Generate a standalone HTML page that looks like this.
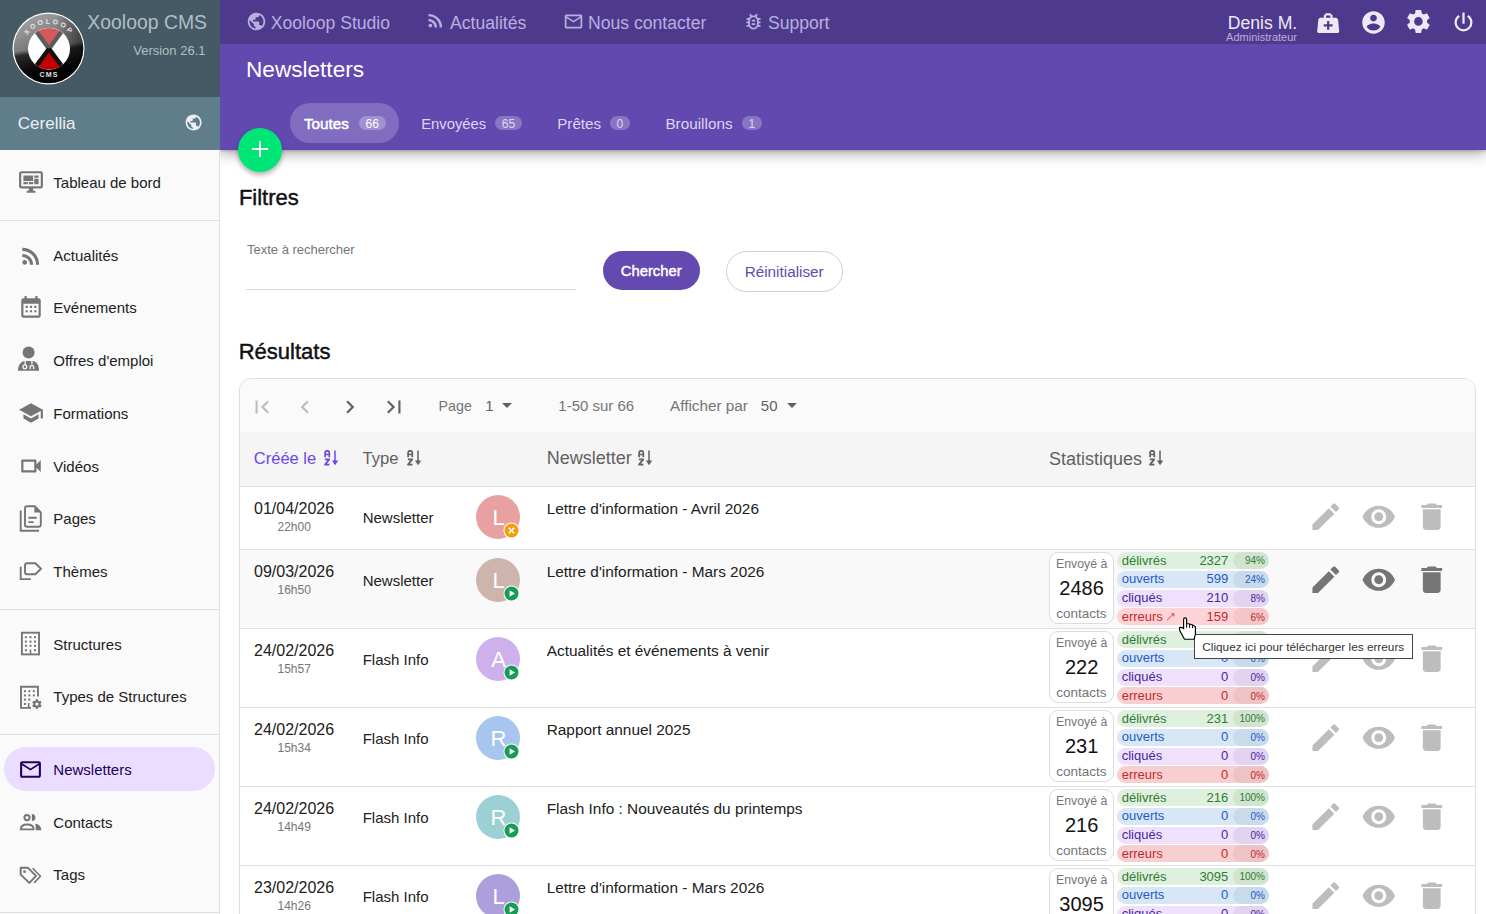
<!DOCTYPE html><html><head><meta charset="utf-8"><style>
html,body{margin:0;padding:0;width:1486px;height:914px;overflow:hidden;background:#fff;font-family:"Liberation Sans",sans-serif;}
.t{position:absolute;white-space:nowrap;line-height:1;}
svg{display:block}
</style></head><body>
<div style="position:absolute;left:0px;top:0px;width:220px;height:97px;background:#455a64"></div>
<div style="position:absolute;left:0px;top:97px;width:220px;height:53px;background:#607d8b"></div>
<div style="position:absolute;left:0px;top:150px;width:219px;height:764px;background:#fafafa;border-right:1px solid #e0e0e0"></div>
<svg style="position:absolute;left:12.0px;top:12.0px;" width="73" height="73" viewBox="0 0 73 73">
<defs>
<linearGradient id="lg1" x1="0.45" y1="0" x2="0.6" y2="1"><stop offset="0" stop-color="#a8a8a8"/><stop offset="0.47" stop-color="#7e7e7e"/><stop offset="0.54" stop-color="#2a2a2a"/><stop offset="0.8" stop-color="#050505"/><stop offset="1" stop-color="#000"/></linearGradient>
<linearGradient id="lg2" x1="0" y1="0" x2="1" y2="0"><stop offset="0" stop-color="#000" stop-opacity="0"/><stop offset="0.6" stop-color="#000" stop-opacity="0.1"/><stop offset="1" stop-color="#000" stop-opacity="0.55"/></linearGradient>
<clipPath id="inner"><circle cx="37" cy="36.7" r="20.8"/></clipPath>
</defs>
<circle cx="36.5" cy="36.5" r="36" fill="#fff"/>
<circle cx="36.5" cy="36.5" r="34.8" fill="url(#lg1)"/>
<circle cx="36.5" cy="36.5" r="34.8" fill="url(#lg2)"/>
<circle cx="37" cy="36.7" r="21" fill="#fff"/>
<g clip-path="url(#inner)">
<polygon points="37,36.7 19,12 55,12" fill="#d45a5a"/>
<polygon points="37,36.7 19,61 55,61" fill="#c00000"/>
<line x1="24" y1="19" x2="37" y2="36.7" stroke="#5c5c5c" stroke-width="4.4"/>
<line x1="50" y1="19" x2="37" y2="36.7" stroke="#5c5c5c" stroke-width="4.4"/>
<line x1="24" y1="54.4" x2="37" y2="36.7" stroke="#111" stroke-width="4.4"/>
<line x1="50" y1="54.4" x2="37" y2="36.7" stroke="#111" stroke-width="4.4"/>
</g>
<text x="37" y="65.3" font-family="Liberation Sans" font-weight="700" font-size="7" fill="#e0e0e0" text-anchor="middle" letter-spacing="1.2">CMS</text>
<path id="arc" d="M 11.5 37 A 25.5 25.5 0 0 1 62.5 37" fill="none"/>
<text font-family="Liberation Sans" font-weight="700" font-size="6.8" fill="#e6e6e6" letter-spacing="2.4"><textPath href="#arc" startOffset="50%" text-anchor="middle">XOOLOOP</textPath></text>
</svg>
<div class="t" style="right:1279.0px;top:13.00px;font-size:19.4px;color:#b0bec5;font-weight:400;">Xooloop CMS</div>
<div class="t" style="right:1280.5px;top:44.00px;font-size:13px;color:#b0bec5;font-weight:400;">Version 26.1</div>
<div class="t" style="left:17.8px;top:115.00px;font-size:17px;color:#eceff1;font-weight:400;">Cerellia</div>
<svg style="position:absolute;left:184.2px;top:112.6px;" width="19.2" height="19.2" viewBox="0 0 24 24"><path fill="#eceff1" d="M12 2C6.48 2 2 6.48 2 12s4.48 10 10 10 10-4.48 10-10S17.52 2 12 2zm-1 17.93c-3.95-.49-7-3.850-7-7.93 0-.62.08-1.21.21-1.79L9 15v1c0 1.1.9 2 2 2v1.93zm6.9-2.54c-.26-.81-1-1.39-1.9-1.39h-1v-3c0-.55-.45-1-1-1H8v-2h2c.55 0 1-.45 1-1V7h2c1.1 0 2-.9 2-2v-.41c2.93 1.19 5 4.06 5 7.41 0 2.080-.8 3.970-2.1 5.39z"/></svg>
<div style="position:absolute;left:0px;top:220px;width:219px;height:1px;background:#e0e0e0"></div>
<div style="position:absolute;left:0px;top:609px;width:219px;height:1px;background:#e0e0e0"></div>
<div style="position:absolute;left:0px;top:734px;width:219px;height:1px;background:#e0e0e0"></div>
<div style="position:absolute;left:0px;top:912px;width:219px;height:1px;background:#e0e0e0"></div>
<div style="position:absolute;left:4.2px;top:747px;width:211px;height:44px;background:#eaddff;border-radius:22px"></div>
<div class="t" style="left:53.3px;top:175.00px;font-size:15px;color:#212121;font-weight:400;">Tableau de bord</div>
<svg style="position:absolute;left:17.6px;top:169.2px;" width="26" height="26" viewBox="0 0 24 24"><path fill="#757575" d="M21,16V4H3V16H21M21,2A2,2 0 0,1 23,4V16A2,2 0 0,1 21,18H14V20H16V22H8V20H10V18H3C1.89,18 1,17.1 1,16V4C1,2.89 1.89,2 3,2H21M5,6H14V11H5V6M15,6H19V8H15V6M19,9V14H15V9H19M5,12H9V14H5V12M10,12H14V14H10V12Z"/></svg>
<div class="t" style="left:53.3px;top:248.00px;font-size:15px;color:#212121;font-weight:400;">Actualités</div>
<svg style="position:absolute;left:17.5px;top:242.5px;" width="26" height="26" viewBox="0 0 24 24"><path fill="#757575" d="M6.18 15.64a2.18 2.18 0 0 1 2.18 2.18C8.36 19 7.38 20 6.18 20 5 20 4 19 4 17.82a2.18 2.18 0 0 1 2.18-2.18M4 4.44A15.56 15.56 0 0 1 19.56 20h-2.83A12.73 12.73 0 0 0 4 7.27V4.44m0 5.66a9.9 9.9 0 0 1 9.9 9.9h-2.83A7.07 7.07 0 0 0 4 12.93V10.1z"/></svg>
<div class="t" style="left:53.3px;top:300.00px;font-size:15px;color:#212121;font-weight:400;">Evénements</div>
<svg style="position:absolute;left:17.5px;top:294.6px;" width="26" height="26" viewBox="0 0 24 24"><path fill="#757575" d="M9,10V12H7V10H9M13,10V12H11V10H13M17,10V12H15V10H17M19,3A2,2 0 0,1 21,5V19A2,2 0 0,1 19,21H5C3.89,21 3,20.1 3,19V5A2,2 0 0,1 5,3H6V1H8V3H16V1H18V3H19M19,19V8H5V19H19M9,14V16H7V14H9M13,14V16H11V14H13M17,14V16H15V14H17Z"/></svg>
<div class="t" style="left:53.3px;top:353.00px;font-size:15px;color:#212121;font-weight:400;">Offres d'emploi</div>
<svg style="position:absolute;left:0;top:340.2px" width="60" height="40" viewBox="0 340.2 60 40"><circle cx="28.6" cy="352.8" r="6" fill="#757575"/><path d="M18,371 C18,365.5 20.5,362.2 24.2,361.2 L33.2,361.2 C37,362.2 39,365.5 39,371 Z" fill="#757575"/><path d="M25.2,361 V364.9 M31.9,361 V364.5" stroke="#fafafa" stroke-width="1.3"/><circle cx="24.9" cy="366.9" r="1.9" fill="none" stroke="#fafafa" stroke-width="1.3"/><path d="M30.2,369.5 V367.2 A1.7,1.7 0 0 1 33.6,367.2 V369.5" fill="none" stroke="#fafafa" stroke-width="1.3"/></svg>
<div class="t" style="left:53.3px;top:406.00px;font-size:15px;color:#212121;font-weight:400;">Formations</div>
<svg style="position:absolute;left:17.5px;top:400.4px;" width="26" height="26" viewBox="0 0 24 24"><path fill="#757575" d="M5 13.18v4L12 21l7-3.82v-4L12 17l-7-3.82zM12 3L1 9l11 6 9-4.91V17h2V9L12 3z"/></svg>
<div class="t" style="left:53.3px;top:459.00px;font-size:15px;color:#212121;font-weight:400;">Vidéos</div>
<svg style="position:absolute;left:17.5px;top:453.3px;" width="26" height="26" viewBox="0 0 24 24"><path fill="#757575" d="M17 10.5V7c0-.55-.45-1-1-1H4c-.55 0-1 .45-1 1v10c0 .55.45 1 1 1h12c.55 0 1-.45 1-1v-3.5l4 4v-11l-4 4zM15 16H5V8h10v8z"/></svg>
<div class="t" style="left:53.3px;top:511.00px;font-size:15px;color:#212121;font-weight:400;">Pages</div>
<svg style="position:absolute;left:0;top:498.20000000000005px" width="60" height="40" viewBox="0 498.20000000000005 60 40"><path d="M20.7,510.8 V531 H39" fill="none" stroke="#757575" stroke-width="1.9"/><path d="M27,506.5 H34.8 L40.8,512.5 V525 Q40.8,527 38.8,527 H27 Q25,527 25,525 V508.5 Q25,506.5 27,506.5 Z" fill="none" stroke="#757575" stroke-width="1.9"/><path d="M34.3,507 V512.6 H40.5 Z" fill="#757575"/><path d="M28.4,517.9 H36.8 M28.4,522.3 H33.6" fill="none" stroke="#757575" stroke-width="1.9"/></svg>
<div class="t" style="left:53.3px;top:564.00px;font-size:15px;color:#212121;font-weight:400;">Thèmes</div>
<svg style="position:absolute;left:0;top:551.1px" width="60" height="40" viewBox="0 551.1 60 40"><path d="M20.7,566.9 V579.2 H30.8" fill="none" stroke="#757575" stroke-width="1.9"/><path d="M25,565.5 Q25,563.4 27,563.4 H35.4 L41,568.9 L35.4,574.4 H27 Q25,574.4 25,572.4 Z" fill="none" stroke="#757575" stroke-width="1.9"/></svg>
<div class="t" style="left:53.3px;top:637.00px;font-size:15px;color:#212121;font-weight:400;">Structures</div>
<svg style="position:absolute;left:0;top:624.4px" width="60" height="40" viewBox="0 624.4 60 40"><rect x="21.9" y="633.1" width="17.1" height="21.7" fill="none" stroke="#757575" stroke-width="1.9"/><rect x="24.9" y="636.6" width="2" height="2" fill="#757575"/><rect x="29.5" y="636.6" width="2" height="2" fill="#757575"/><rect x="34" y="636.6" width="2" height="2" fill="#757575"/><rect x="24.9" y="641" width="2" height="2" fill="#757575"/><rect x="29.5" y="641" width="2" height="2" fill="#757575"/><rect x="34" y="641" width="2" height="2" fill="#757575"/><rect x="24.9" y="645.2" width="2" height="2" fill="#757575"/><rect x="29.5" y="645.2" width="2" height="2" fill="#757575"/><rect x="34" y="645.2" width="2" height="2" fill="#757575"/><rect x="24.9" y="649.6" width="2" height="2" fill="#757575"/><rect x="34" y="649.6" width="2" height="2" fill="#757575"/><path d="M30.5,650 V654" stroke="#757575" stroke-width="1.6"/></svg>
<div class="t" style="left:53.3px;top:689.00px;font-size:15px;color:#212121;font-weight:400;">Types de Structures</div>
<svg style="position:absolute;left:0;top:676.5px" width="60" height="40" viewBox="0 676.5 60 40"><path d="M31,707.4 H21 V686.2 H38 V696" fill="none" stroke="#757575" stroke-width="1.9"/><rect x="23.9" y="689.7" width="2" height="2" fill="#757575"/><rect x="28.4" y="689.7" width="2" height="2" fill="#757575"/><rect x="32.8" y="689.7" width="2" height="2" fill="#757575"/><rect x="23.9" y="693.9" width="2" height="2" fill="#757575"/><rect x="28.4" y="693.9" width="2" height="2" fill="#757575"/><rect x="32.8" y="693.9" width="2" height="2" fill="#757575"/><rect x="23.9" y="698.1" width="2" height="2" fill="#757575"/><rect x="28.4" y="698.1" width="2" height="2" fill="#757575"/><rect x="23.9" y="702.5" width="2" height="2" fill="#757575"/><path d="M28.7,702.5 V707" stroke="#757575" stroke-width="1.6"/><circle cx="36.9" cy="703.6" r="6.6" fill="#fafafa"/><g transform="translate(31.2,697.9) scale(0.475)"><path d="M12,15.5A3.5,3.5 0 0,1 8.5,12A3.5,3.5 0 0,1 12,8.5A3.5,3.5 0 0,1 15.5,12A3.5,3.5 0 0,1 12,15.5M19.43,12.97C19.47,12.65 19.5,12.33 19.5,12C19.5,11.67 19.47,11.34 19.43,11L21.54,9.37C21.73,9.22 21.78,8.95 21.66,8.73L19.66,5.27C19.54,5.05 19.27,4.96 19.05,5.05L16.56,6.05C16.04,5.66 15.5,5.32 14.87,5.07L14.5,2.42C14.46,2.18 14.25,2 14,2H10C9.75,2 9.54,2.18 9.5,2.42L9.13,5.07C8.5,5.32 7.96,5.66 7.44,6.05L4.95,5.05C4.73,4.96 4.46,5.05 4.34,5.27L2.34,8.73C2.21,8.95 2.27,9.22 2.46,9.37L4.57,11C4.53,11.34 4.5,11.67 4.5,12C4.5,12.33 4.53,12.65 4.57,12.97L2.46,14.63C2.27,14.78 2.21,15.05 2.34,15.27L4.34,18.73C4.46,18.95 4.73,19.03 4.95,18.95L7.44,17.94C7.96,18.34 8.5,18.68 9.13,18.93L9.5,21.58C9.54,21.82 9.75,22 10,22H14C14.25,22 14.46,21.82 14.5,21.58L14.87,18.93C15.5,18.67 16.04,18.34 16.56,17.94L19.05,18.95C19.27,19.03 19.54,18.95 19.66,18.73L21.66,15.27C21.78,15.05 21.73,14.78 21.54,14.63L19.43,12.97Z" fill="#757575"/></g></svg>
<div class="t" style="left:53.3px;top:762.00px;font-size:15px;color:#21005d;font-weight:400;">Newsletters</div>
<svg style="position:absolute;left:18.0px;top:756.7px;" width="25" height="25" viewBox="0 0 24 24"><path fill="#21005d" d="M20 4H4c-1.1 0-1.99.9-1.99 2L2 18c0 1.1.9 2 2 2h16c1.1 0 2-.9 2-2V6c0-1.1-.9-2-2-2zm0 14H4V8l8 5 8-5v10zm-8-7L4 6h16l-8 5z"/></svg>
<div class="t" style="left:53.3px;top:815.00px;font-size:15px;color:#212121;font-weight:400;">Contacts</div>
<svg style="position:absolute;left:0;top:802.6px" width="60" height="40" viewBox="0 802.6 60 40"><circle cx="27" cy="817.2" r="2.65" fill="none" stroke="#757575" stroke-width="1.9"/><path d="M31.9,813.7 A3.5,3.5 0 0 1 31.9,820.7 Z" fill="#757575"/><path d="M32,813.7 H31.9" stroke="#757575"/><path d="M20.8,829 C20.8,825.5 23.5,824.1 27.2,824.1 C31,824.1 33.7,825.5 33.7,829 Z" fill="none" stroke="#757575" stroke-width="1.9"/><path d="M35.3,823.3 C38.6,823.8 41.3,825.5 41.3,829.9 H35.8 C35.8,827 35.5,825 35.3,823.3 Z" fill="#757575"/></svg>
<div class="t" style="left:53.3px;top:867.00px;font-size:15px;color:#212121;font-weight:400;">Tags</div>
<svg style="position:absolute;left:0;top:854.7px" width="60" height="40" viewBox="0 854.7 60 40"><path d="M20.7,867.5 H28 L36,875.6 L29.4,882.6 L20.7,874.3 Z" fill="none" stroke="#757575" stroke-width="1.9" stroke-linejoin="round"/><circle cx="24.5" cy="871.4" r="1.4" fill="#757575"/><path d="M32.6,868 L40.4,876 L34.1,882.6" fill="none" stroke="#757575" stroke-width="1.6"/></svg>
<div style="position:absolute;left:220px;top:0px;width:1266px;height:44px;background:#4e3a8c"></div>
<svg style="position:absolute;left:245.6px;top:11.2px;" width="21" height="21" viewBox="0 0 24 24"><path fill="#b9aee0" d="M12 2C6.48 2 2 6.48 2 12s4.48 10 10 10 10-4.48 10-10S17.52 2 12 2zm-1 17.93c-3.95-.49-7-3.850-7-7.93 0-.62.08-1.21.21-1.79L9 15v1c0 1.1.9 2 2 2v1.93zm6.9-2.54c-.26-.81-1-1.39-1.9-1.39h-1v-3c0-.55-.45-1-1-1H8v-2h2c.55 0 1-.45 1-1V7h2c1.1 0 2-.9 2-2v-.41c2.93 1.19 5 4.06 5 7.41 0 2.080-.8 3.970-2.1 5.39z"/></svg>
<div class="t" style="left:270.7px;top:15.00px;font-size:17.6px;color:#b9aee0;font-weight:400;">Xooloop Studio</div>
<svg style="position:absolute;left:424.5px;top:9.5px;" width="21" height="21" viewBox="0 0 24 24"><path fill="#b9aee0" d="M6.18 15.64a2.18 2.18 0 0 1 2.18 2.18C8.36 19 7.38 20 6.18 20 5 20 4 19 4 17.82a2.18 2.18 0 0 1 2.18-2.18M4 4.44A15.56 15.56 0 0 1 19.56 20h-2.83A12.73 12.73 0 0 0 4 7.27V4.44m0 5.66a9.9 9.9 0 0 1 9.9 9.9h-2.83A7.07 7.07 0 0 0 4 12.93V10.1z"/></svg>
<div class="t" style="left:450.0px;top:15.00px;font-size:17.6px;color:#b9aee0;font-weight:400;">Actualités</div>
<svg style="position:absolute;left:562.8px;top:10.5px;" width="21" height="21" viewBox="0 0 24 24"><path fill="#b9aee0" d="M20 4H4c-1.1 0-1.99.9-1.99 2L2 18c0 1.1.9 2 2 2h16c1.1 0 2-.9 2-2V6c0-1.1-.9-2-2-2zm0 14H4V8l8 5 8-5v10zm-8-7L4 6h16l-8 5z"/></svg>
<div class="t" style="left:588.0px;top:15.00px;font-size:17.6px;color:#b9aee0;font-weight:400;">Nous contacter</div>
<svg style="position:absolute;left:743.0px;top:10.5px;" width="21" height="21" viewBox="0 0 24 24"><path fill="#b9aee0" d="M20 8h-2.81c-.45-.78-1.07-1.45-1.82-1.96L17 4.41 15.59 3l-2.17 2.17C12.96 5.060 12.49 5 12 5c-.49 0-.96.06-1.41.17L8.41 3 7 4.41l1.62 1.63C7.88 6.55 7.26 7.22 6.81 8H4v2h2.09c-.05.33-.09.66-.09 1v1H4v2h2v1c0 .34.04.67.09 1H4v2h2.81c1.04 1.79 2.970 3 5.19 3s4.15-1.21 5.19-3H20v-2h-2.09c.05-.33.09-.66.09-1v-1h2v-2h-2v-1c0-.34-.04-.67-.09-1H20V8zm-4 4v3c0 .22-.03.47-.07.7l-.1.65-.37.65c-.72 1.240-2.04 2-3.46 2s-2.74-.77-3.46-2l-.37-.64-.1-.65C8.030 15.480 8 15.230 8 15v-4c0-.23.03-.48.07-.7l.1-.65.37-.65c.3-.52.72-.97 1.21-1.31l.57-.39.74-.18c.31-.08.63-.12.94-.12.32 0 .63.04.95.12l.68.16.61.42c.5.34.91.78 1.21 1.31l.38.65.1.65c.04.22.07.47.07.69v1zm-6 2h4v2h-4zm0-4h4v2h-4z"/></svg>
<div class="t" style="left:767.9px;top:15.00px;font-size:17.6px;color:#b9aee0;font-weight:400;">Support</div>
<div class="t" style="right:188.8px;top:15.00px;font-size:17.6px;color:#ece8f6;font-weight:400;">Denis M.</div>
<div class="t" style="right:189.0px;top:32.00px;font-size:11px;color:#b9b0d9;font-weight:400;">Administrateur</div>
<svg style="position:absolute;left:1314.6px;top:9.6px;" width="26.4" height="26.4" viewBox="0 0 24 24"><path fill="#ece8f6" d="M10,3L8,5V7H5C3.85,7 3.12,8 3,9L2,19C1.88,20 2.54,21 4,21H20C21.46,21 22.12,20 22,19L21,9C20.88,8 20.06,7 19,7H16V5L14,3H10M10,5H14V7H10V5M11,10H13V13H16V15H13V18H11V15H8V13H11V10Z"/></svg>
<svg style="position:absolute;left:1359.7px;top:8.8px;" width="27" height="27" viewBox="0 0 24 24"><path fill="#ece8f6" d="M12 2C6.48 2 2 6.48 2 12s4.48 10 10 10 10-4.48 10-10S17.52 2 12 2zm0 3c1.66 0 3 1.34 3 3s-1.34 3-3 3-3-1.34-3-3 1.34-3 3-3zm0 14.2c-2.5 0-4.71-1.28-6-3.22.03-1.99 4-3.080 6-3.08 1.99 0 5.970 1.09 6 3.08-1.29 1.94-3.5 3.22-6 3.22z"/></svg>
<svg style="position:absolute;left:1403.6px;top:7.4px;" width="28.8" height="28.8" viewBox="0 0 24 24"><path fill="#ece8f6" d="M19.14 12.94c.04-.3.06-.61.06-.94 0-.32-.02-.64-.07-.94l2.03-1.58c.18-.14.23-.41.12-.61l-1.92-3.32c-.12-.22-.37-.29-.59-.22l-2.39.96c-.5-.38-1.03-.7-1.62-.94l-.36-2.54c-.04-.24-.24-.41-.48-.41h-3.84c-.24 0-.43.17-.47.41l-.36 2.54c-.59.24-1.13.57-1.62.94l-2.39-.96c-.22-.08-.47 0-.59.22L2.74 8.87c-.12.21-.08.47.12.61l2.03 1.58c-.05.3-.09.63-.09.94s.02.64.07.94l-2.03 1.58c-.18.14-.23.41-.12.61l1.92 3.32c.12.22.37.29.59.22l2.39-.96c.5.38 1.03.7 1.62.94l.36 2.54c.05.24.24.41.48.41h3.84c.24 0 .44-.17.47-.41l.36-2.54c.59-.24 1.13-.56 1.62-.94l2.39.96c.22.08.47 0 .59-.22l1.92-3.32c.12-.22.07-.47-.12-.61l-2.01-1.58zM12 15.6c-1.98 0-3.6-1.62-3.6-3.6s1.62-3.6 3.6-3.6 3.6 1.62 3.6 3.6-1.62 3.6-3.6 3.6z"/></svg>
<svg style="position:absolute;left:1449.5px;top:9.0px;" width="27" height="27" viewBox="0 0 24 24"><path fill="#ece8f6" d="M16.56,5.44L15.11,6.89C16.84,7.94 18,9.83 18,12A6,6 0 0,1 12,18A6,6 0 0,1 6,12C6,9.83 7.16,7.94 8.88,6.88L7.44,5.44C5.36,6.88 4,9.28 4,12A8,8 0 0,0 12,20A8,8 0 0,0 20,12C20,9.28 18.64,6.88 16.56,5.44M13,3H11V13H13Z"/></svg>
<div style="position:absolute;left:220px;top:44px;width:1266px;height:106px;background:#6149b0;box-shadow:0 4px 13px rgba(0,0,0,.32),0 1px 3px rgba(0,0,0,.2);clip-path:inset(0 0 -40px 0)"></div>
<div class="t" style="left:246.0px;top:59.00px;font-size:22.6px;color:#ffffff;font-weight:400;">Newsletters</div>
<div style="position:absolute;left:290px;top:103px;width:109px;height:40px;background:rgba(255,255,255,.2);border-radius:20px"></div>
<div class="t" style="left:304.0px;top:116.00px;font-size:15.2px;color:#ffffff;font-weight:400;-webkit-text-stroke:0.5px #fff">Toutes</div>
<div style="position:absolute;left:358.8px;top:116px;width:27px;height:14px;background:rgba(255,255,255,.25);border-radius:7px"></div>
<div class="t" style="left:72.3px;width:600px;text-align:center;top:118.00px;font-size:12px;color:#ffffff;font-weight:400;">66</div>
<div class="t" style="left:421.2px;top:117.00px;font-size:14.8px;color:#ddd6f1;font-weight:400;">Envoyées</div>
<div style="position:absolute;left:494.9px;top:116px;width:27px;height:14px;background:rgba(255,255,255,.25);border-radius:7px"></div>
<div class="t" style="left:208.4px;width:600px;text-align:center;top:118.00px;font-size:12px;color:#ddd6f1;font-weight:400;">65</div>
<div class="t" style="left:557.2px;top:116.00px;font-size:15.2px;color:#ddd6f1;font-weight:400;">Prêtes</div>
<div style="position:absolute;left:609.9px;top:116px;width:20px;height:14px;background:rgba(255,255,255,.25);border-radius:7px"></div>
<div class="t" style="left:319.9px;width:600px;text-align:center;top:118.00px;font-size:12px;color:#ddd6f1;font-weight:400;">0</div>
<div class="t" style="left:665.4px;top:116.00px;font-size:15.3px;color:#ddd6f1;font-weight:400;">Brouillons</div>
<div style="position:absolute;left:741.9px;top:116px;width:20px;height:14px;background:rgba(255,255,255,.25);border-radius:7px"></div>
<div class="t" style="left:451.9px;width:600px;text-align:center;top:118.00px;font-size:12px;color:#ddd6f1;font-weight:400;">1</div>
<div style="position:absolute;left:238px;top:128px;width:44px;height:44px;background:#00e676;border-radius:50%;box-shadow:0 3px 5px rgba(0,0,0,.3)"></div>
<div style="position:absolute;left:251.8px;top:148.1px;width:15.8px;height:2px;background:#fff"></div>
<div style="position:absolute;left:258.7px;top:141.2px;width:2px;height:15.8px;background:#fff"></div>
<div class="t" style="left:238.9px;top:187.00px;font-size:22px;color:#111;font-weight:400;-webkit-text-stroke:0.45px #111">Filtres</div>
<div class="t" style="left:247.0px;top:243.00px;font-size:13px;color:#757575;font-weight:400;">Texte à rechercher</div>
<div style="position:absolute;left:246px;top:289px;width:330px;height:1px;background:#d9d9d9"></div>
<div style="position:absolute;left:602.7px;top:250.9px;width:97.3px;height:39px;background:#6349b0;border-radius:20px"></div>
<div class="t" style="left:351.2px;width:600px;text-align:center;top:264.00px;font-size:14.8px;color:#fff;font-weight:400;-webkit-text-stroke:0.45px #fff">Chercher</div>
<div style="position:absolute;left:726.3px;top:251.3px;width:115px;height:39px;border:1px solid #d0d0d0;border-radius:21px"></div>
<div class="t" style="left:484.2px;width:600px;text-align:center;top:264.00px;font-size:15.3px;color:#6349b0;font-weight:400;">Réinitialiser</div>
<div class="t" style="left:238.7px;top:341.00px;font-size:22px;color:#111;font-weight:400;-webkit-text-stroke:0.45px #111">Résultats</div>
<div style="position:absolute;left:239px;top:378px;width:1237px;height:600px;box-sizing:border-box;border:1px solid #e0e0e0;border-radius:12px;background:#fff;overflow:hidden"></div>
<div style="position:absolute;left:240px;top:379px;width:1235px;height:53px;background:#fafafa;border-radius:11px 11px 0 0"></div>
<div style="position:absolute;left:240px;top:432px;width:1235px;height:54px;background:#f5f5f5"></div>
<div style="position:absolute;left:240px;top:486px;width:1235px;height:1px;background:#e0e0e0"></div>
<svg style="position:absolute;left:248.5px;top:393.5px;" width="26" height="26" viewBox="0 0 24 24"><path fill="#bdbdbd" d="M18.41 16.59L13.82 12l4.59-4.59L17 6l-6 6 6 6zM6 6h2v12H6z"/></svg>
<svg style="position:absolute;left:292.4px;top:393.5px;" width="26" height="26" viewBox="0 0 24 24"><path fill="#bdbdbd" d="M15.41 7.41L14 6l-6 6 6 6 1.41-1.41L10.83 12z"/></svg>
<svg style="position:absolute;left:336.5px;top:393.5px;" width="26" height="26" viewBox="0 0 24 24"><path fill="#616161" d="M10 6L8.59 7.41 13.17 12l-4.58 4.59L10 18l6-6z"/></svg>
<svg style="position:absolute;left:380.5px;top:393.5px;" width="26" height="26" viewBox="0 0 24 24"><path fill="#616161" d="M5.59 7.41L10.18 12l-4.59 4.59L7 18l6-6-6-6zM16 6h2v12h-2z"/></svg>
<div class="t" style="left:438.5px;top:399.00px;font-size:14.3px;color:#757575;font-weight:400;">Page</div>
<div class="t" style="left:485.3px;top:398.00px;font-size:15px;color:#616161;font-weight:400;">1</div>
<svg style="position:absolute;left:495.1px;top:393.3px;" width="24" height="24" viewBox="0 0 24 24"><path fill="#616161" d="M7 10l5 5 5-5z"/></svg>
<div class="t" style="left:558.3px;top:398.00px;font-size:15px;color:#757575;font-weight:400;">1-50 sur 66</div>
<div class="t" style="left:670.0px;top:398.00px;font-size:15.3px;color:#757575;font-weight:400;">Afficher par</div>
<div class="t" style="left:760.8px;top:398.00px;font-size:15px;color:#616161;font-weight:400;">50</div>
<svg style="position:absolute;left:780.2px;top:393.3px;" width="24" height="24" viewBox="0 0 24 24"><path fill="#616161" d="M7 10l5 5 5-5z"/></svg>
<div class="t" style="left:253.8px;top:450.00px;font-size:16.5px;color:#6e45e8;font-weight:400;">Créée le</div>
<svg style="position:absolute;left:324.2px;top:449.8px;" width="16" height="16" viewBox="0 0 16 16"><g fill="none" stroke="#6e45e8" stroke-width="1.7" stroke-linejoin="round">
<path d="M1.1,7.2 V3 Q1.1,0.8 3.2,0.8 Q5.3,0.8 5.3,3 V7.2 M1.1,4.5 H5.3"/>
<path d="M0.9,9.4 H5.2 L1,14.6 H5.4"/></g>
<path d="M11,0.5 V12" stroke="#6e45e8" stroke-width="1.5"/>
<polygon points="7.9,10.6 14.2,10.6 11.05,15.3" fill="#6e45e8"/></svg>
<div class="t" style="left:362.6px;top:451.00px;font-size:16.6px;color:#616161;font-weight:400;">Type</div>
<svg style="position:absolute;left:407.0px;top:449.8px;" width="16" height="16" viewBox="0 0 16 16"><g fill="none" stroke="#616161" stroke-width="1.7" stroke-linejoin="round">
<path d="M1.1,7.2 V3 Q1.1,0.8 3.2,0.8 Q5.3,0.8 5.3,3 V7.2 M1.1,4.5 H5.3"/>
<path d="M0.9,9.4 H5.2 L1,14.6 H5.4"/></g>
<path d="M11,0.5 V12" stroke="#616161" stroke-width="1.5"/>
<polygon points="7.9,10.6 14.2,10.6 11.05,15.3" fill="#616161"/></svg>
<div class="t" style="left:546.7px;top:449.00px;font-size:18px;color:#616161;font-weight:400;">Newsletter</div>
<svg style="position:absolute;left:638.4px;top:449.8px;" width="16" height="16" viewBox="0 0 16 16"><g fill="none" stroke="#616161" stroke-width="1.7" stroke-linejoin="round">
<path d="M1.1,7.2 V3 Q1.1,0.8 3.2,0.8 Q5.3,0.8 5.3,3 V7.2 M1.1,4.5 H5.3"/>
<path d="M0.9,9.4 H5.2 L1,14.6 H5.4"/></g>
<path d="M11,0.5 V12" stroke="#616161" stroke-width="1.5"/>
<polygon points="7.9,10.6 14.2,10.6 11.05,15.3" fill="#616161"/></svg>
<div class="t" style="left:1049.0px;top:450.00px;font-size:18px;color:#616161;font-weight:400;">Statistiques</div>
<svg style="position:absolute;left:1149.2px;top:449.8px;" width="16" height="16" viewBox="0 0 16 16"><g fill="none" stroke="#616161" stroke-width="1.7" stroke-linejoin="round">
<path d="M1.1,7.2 V3 Q1.1,0.8 3.2,0.8 Q5.3,0.8 5.3,3 V7.2 M1.1,4.5 H5.3"/>
<path d="M0.9,9.4 H5.2 L1,14.6 H5.4"/></g>
<path d="M11,0.5 V12" stroke="#616161" stroke-width="1.5"/>
<polygon points="7.9,10.6 14.2,10.6 11.05,15.3" fill="#616161"/></svg>
<div class="t" style="left:254.0px;top:501.00px;font-size:16px;color:#212121;font-weight:400;">01/04/2026</div>
<div class="t" style="left:-5.8px;width:600px;text-align:center;top:521.00px;font-size:12px;color:#757575;font-weight:400;">22h00</div>
<div class="t" style="left:362.7px;top:510.00px;font-size:15px;color:#212121;font-weight:400;">Newsletter</div>
<div style="position:absolute;left:476px;top:495px;width:44px;height:44px;background:#e8a1a1;border-radius:50%"></div>
<div class="t" style="left:198.5px;width:600px;text-align:center;top:507.00px;font-size:22px;color:#fff;font-weight:400;">L</div>
<svg style="position:absolute;left:503.0px;top:521.7px;" width="17" height="17" viewBox="0 0 17 17"><circle cx="8.5" cy="8.5" r="8" fill="#fff"/><circle cx="8.5" cy="8.5" r="7" fill="#f59d0e"/><path d="M5.8,5.8 L11.2,11.2 M11.2,5.8 L5.8,11.2" stroke="#fff" stroke-width="1.6"/></svg>
<div class="t" style="left:546.7px;top:501.00px;font-size:15.4px;color:#212121;font-weight:400;">Lettre d'information - Avril 2026</div>
<svg style="position:absolute;left:1308.0px;top:499.2px;" width="35.5" height="35.5" viewBox="0 0 24 24"><path fill="#bdbdbd" d="M3 17.25V21h3.75L17.81 9.94l-3.75-3.75L3 17.25zM20.71 7.04c.39-.39.39-1.02 0-1.41l-2.34-2.34c-.39-.39-1.02-.39-1.41 0l-1.83 1.83 3.75 3.75 1.83-1.83z"/></svg>
<svg style="position:absolute;left:1360.8px;top:499.2px;" width="35.5" height="35.5" viewBox="0 0 24 24"><path fill="#bdbdbd" d="M12 4.5C7 4.5 2.73 7.61 1 12c1.73 4.39 6 7.5 11 7.5s9.27-3.11 11-7.5c-1.73-4.39-6-7.5-11-7.5zM12 17c-2.76 0-5-2.24-5-5s2.24-5 5-5 5 2.24 5 5-2.24 5-5 5zm0-8c-1.66 0-3 1.34-3 3s1.34 3 3 3 3-1.34 3-3-1.34-3-3-3z"/></svg>
<svg style="position:absolute;left:1413.5px;top:499.2px;" width="35.5" height="35.5" viewBox="0 0 24 24"><path fill="#bdbdbd" d="M6 19c0 1.1.9 2 2 2h8c1.1 0 2-.9 2-2V7H6v12zM19 4h-3.5l-1-1h-5l-1 1H5v2h14V4z"/></svg>
<div style="position:absolute;left:240px;top:550px;width:1235px;height:78px;background:#f9f9f9"></div>
<div style="position:absolute;left:240px;top:549px;width:1235px;height:1px;background:#e0e0e0"></div>
<div class="t" style="left:254.0px;top:564.00px;font-size:16px;color:#212121;font-weight:400;">09/03/2026</div>
<div class="t" style="left:-5.8px;width:600px;text-align:center;top:584.00px;font-size:12px;color:#757575;font-weight:400;">16h50</div>
<div class="t" style="left:362.7px;top:573.00px;font-size:15px;color:#212121;font-weight:400;">Newsletter</div>
<div style="position:absolute;left:476px;top:558px;width:44px;height:44px;background:#cdb5ad;border-radius:50%"></div>
<div class="t" style="left:198.5px;width:600px;text-align:center;top:570.00px;font-size:22px;color:#fff;font-weight:400;">L</div>
<svg style="position:absolute;left:503.0px;top:584.7px;" width="17" height="17" viewBox="0 0 17 17"><circle cx="8.5" cy="8.5" r="8" fill="#fff"/><circle cx="8.5" cy="8.5" r="7" fill="#169d55"/><polygon points="6.6,5.2 12,8.5 6.6,11.8" fill="#fff"/></svg>
<div class="t" style="left:546.7px;top:564.00px;font-size:15.4px;color:#212121;font-weight:400;">Lettre d'information - Mars 2026</div>
<div style="position:absolute;left:1049.4px;top:552.1px;width:65px;height:72.4px;box-sizing:border-box;border:1px solid #dcdcdc;border-radius:9px;background:#fff"></div>
<div class="t" style="left:781.6px;width:600px;text-align:center;top:558.00px;font-size:12.3px;color:#757575;font-weight:400;">Envoyé à</div>
<div class="t" style="left:781.6px;width:600px;text-align:center;top:578.00px;font-size:20px;color:#111;font-weight:400;">2486</div>
<div class="t" style="left:781.4px;width:600px;text-align:center;top:607.00px;font-size:13.5px;color:#757575;font-weight:400;">contacts</div>
<div style="position:absolute;left:1117.3px;top:552.10px;width:151.7px;height:17px;border-radius:9px;background:#dff0df;overflow:hidden"><div style="position:absolute;right:0;top:0;width:36px;height:17px;border-radius:9px;background:#d0e4d0"></div></div>
<div class="t" style="left:1121.7px;top:554.00px;font-size:13px;color:#2e7d32;font-weight:400;">délivrés</div>
<div class="t" style="right:257.7px;top:554.00px;font-size:13px;color:#2e7d32;font-weight:400;">2327</div>
<div class="t" style="right:221.0px;top:556.00px;font-size:10px;color:#2e7d32;font-weight:400;">94%</div>
<div style="position:absolute;left:1117.3px;top:570.85px;width:151.7px;height:17px;border-radius:9px;background:#d8e7f5;overflow:hidden"><div style="position:absolute;right:0;top:0;width:36px;height:17px;border-radius:9px;background:#c9dbea"></div></div>
<div class="t" style="left:1121.7px;top:572.00px;font-size:13px;color:#1e5ac8;font-weight:400;">ouverts</div>
<div class="t" style="right:257.7px;top:572.00px;font-size:13px;color:#1e5ac8;font-weight:400;">599</div>
<div class="t" style="right:221.0px;top:575.00px;font-size:10px;color:#1e5ac8;font-weight:400;">24%</div>
<div style="position:absolute;left:1117.3px;top:589.60px;width:151.7px;height:17px;border-radius:9px;background:#efe1fb;overflow:hidden"><div style="position:absolute;right:0;top:0;width:36px;height:17px;border-radius:9px;background:#e2d4f0"></div></div>
<div class="t" style="left:1121.7px;top:591.00px;font-size:13px;color:#4527a0;font-weight:400;">cliqués</div>
<div class="t" style="right:257.7px;top:591.00px;font-size:13px;color:#4527a0;font-weight:400;">210</div>
<div class="t" style="right:221.0px;top:594.00px;font-size:10px;color:#4527a0;font-weight:400;">8%</div>
<div style="position:absolute;left:1117.3px;top:608.35px;width:151.7px;height:17px;border-radius:9px;background:#fdd3d7;overflow:hidden"><div style="position:absolute;right:0;top:0;width:36px;height:17px;border-radius:9px;background:#f3c6ca"></div></div>
<svg style="position:absolute;left:1165px;top:611px" width="11" height="11" viewBox="1165 611 11 11"><path d="M1167.2,620.1 L1173.7,613.9 M1171.2,613.8 H1173.9 V616.5" fill="none" stroke="#d14545" stroke-width="1"/></svg>
<div class="t" style="left:1121.7px;top:610.00px;font-size:13px;color:#c62828;font-weight:400;">erreurs</div>
<div class="t" style="right:257.7px;top:610.00px;font-size:13px;color:#c62828;font-weight:400;">159</div>
<div class="t" style="right:221.0px;top:613.00px;font-size:10px;color:#c62828;font-weight:400;">6%</div>
<svg style="position:absolute;left:1308.0px;top:562.2px;" width="35.5" height="35.5" viewBox="0 0 24 24"><path fill="#757575" d="M3 17.25V21h3.75L17.81 9.94l-3.75-3.75L3 17.25zM20.71 7.04c.39-.39.39-1.02 0-1.41l-2.34-2.34c-.39-.39-1.02-.39-1.41 0l-1.83 1.83 3.75 3.75 1.83-1.83z"/></svg>
<svg style="position:absolute;left:1360.8px;top:562.2px;" width="35.5" height="35.5" viewBox="0 0 24 24"><path fill="#757575" d="M12 4.5C7 4.5 2.73 7.61 1 12c1.73 4.39 6 7.5 11 7.5s9.27-3.11 11-7.5c-1.73-4.39-6-7.5-11-7.5zM12 17c-2.76 0-5-2.24-5-5s2.24-5 5-5 5 2.24 5 5-2.24 5-5 5zm0-8c-1.66 0-3 1.34-3 3s1.34 3 3 3 3-1.34 3-3-1.34-3-3-3z"/></svg>
<svg style="position:absolute;left:1413.5px;top:562.2px;" width="35.5" height="35.5" viewBox="0 0 24 24"><path fill="#757575" d="M6 19c0 1.1.9 2 2 2h8c1.1 0 2-.9 2-2V7H6v12zM19 4h-3.5l-1-1h-5l-1 1H5v2h14V4z"/></svg>
<div style="position:absolute;left:240px;top:628px;width:1235px;height:1px;background:#e0e0e0"></div>
<div class="t" style="left:254.0px;top:643.00px;font-size:16px;color:#212121;font-weight:400;">24/02/2026</div>
<div class="t" style="left:-5.8px;width:600px;text-align:center;top:663.00px;font-size:12px;color:#757575;font-weight:400;">15h57</div>
<div class="t" style="left:362.7px;top:652.00px;font-size:15px;color:#212121;font-weight:400;">Flash Info</div>
<div style="position:absolute;left:476px;top:637px;width:44px;height:44px;background:#cdb0ec;border-radius:50%"></div>
<div class="t" style="left:198.5px;width:600px;text-align:center;top:649.00px;font-size:22px;color:#fff;font-weight:400;">A</div>
<svg style="position:absolute;left:503.0px;top:663.7px;" width="17" height="17" viewBox="0 0 17 17"><circle cx="8.5" cy="8.5" r="8" fill="#fff"/><circle cx="8.5" cy="8.5" r="7" fill="#169d55"/><polygon points="6.6,5.2 12,8.5 6.6,11.8" fill="#fff"/></svg>
<div class="t" style="left:546.7px;top:643.00px;font-size:15.4px;color:#212121;font-weight:400;">Actualités et événements à venir</div>
<div style="position:absolute;left:1049.4px;top:631.1px;width:65px;height:72.4px;box-sizing:border-box;border:1px solid #dcdcdc;border-radius:9px;background:#fff"></div>
<div class="t" style="left:781.6px;width:600px;text-align:center;top:637.00px;font-size:12.3px;color:#757575;font-weight:400;">Envoyé à</div>
<div class="t" style="left:781.6px;width:600px;text-align:center;top:657.00px;font-size:20px;color:#111;font-weight:400;">222</div>
<div class="t" style="left:781.4px;width:600px;text-align:center;top:686.00px;font-size:13.5px;color:#757575;font-weight:400;">contacts</div>
<div style="position:absolute;left:1117.3px;top:631.10px;width:151.7px;height:17px;border-radius:9px;background:#dff0df;overflow:hidden"><div style="position:absolute;right:0;top:0;width:36px;height:17px;border-radius:9px;background:#d0e4d0"></div></div>
<div class="t" style="left:1121.7px;top:633.00px;font-size:13px;color:#2e7d32;font-weight:400;">délivrés</div>
<div class="t" style="right:257.7px;top:633.00px;font-size:13px;color:#2e7d32;font-weight:400;">222</div>
<div class="t" style="right:221.0px;top:635.00px;font-size:10px;color:#2e7d32;font-weight:400;">100%</div>
<div style="position:absolute;left:1117.3px;top:649.85px;width:151.7px;height:17px;border-radius:9px;background:#d8e7f5;overflow:hidden"><div style="position:absolute;right:0;top:0;width:36px;height:17px;border-radius:9px;background:#c9dbea"></div></div>
<div class="t" style="left:1121.7px;top:651.00px;font-size:13px;color:#1e5ac8;font-weight:400;">ouverts</div>
<div class="t" style="right:257.7px;top:651.00px;font-size:13px;color:#1e5ac8;font-weight:400;">0</div>
<div class="t" style="right:221.0px;top:654.00px;font-size:10px;color:#1e5ac8;font-weight:400;">0%</div>
<div style="position:absolute;left:1117.3px;top:668.60px;width:151.7px;height:17px;border-radius:9px;background:#efe1fb;overflow:hidden"><div style="position:absolute;right:0;top:0;width:36px;height:17px;border-radius:9px;background:#e2d4f0"></div></div>
<div class="t" style="left:1121.7px;top:670.00px;font-size:13px;color:#4527a0;font-weight:400;">cliqués</div>
<div class="t" style="right:257.7px;top:670.00px;font-size:13px;color:#4527a0;font-weight:400;">0</div>
<div class="t" style="right:221.0px;top:673.00px;font-size:10px;color:#4527a0;font-weight:400;">0%</div>
<div style="position:absolute;left:1117.3px;top:687.35px;width:151.7px;height:17px;border-radius:9px;background:#f8cfd1;overflow:hidden"><div style="position:absolute;right:0;top:0;width:36px;height:17px;border-radius:9px;background:#edc3c6"></div></div>
<div class="t" style="left:1121.7px;top:689.00px;font-size:13px;color:#c62828;font-weight:400;">erreurs</div>
<div class="t" style="right:257.7px;top:689.00px;font-size:13px;color:#c62828;font-weight:400;">0</div>
<div class="t" style="right:221.0px;top:692.00px;font-size:10px;color:#c62828;font-weight:400;">0%</div>
<svg style="position:absolute;left:1308.0px;top:641.2px;" width="35.5" height="35.5" viewBox="0 0 24 24"><path fill="#bdbdbd" d="M3 17.25V21h3.75L17.81 9.94l-3.75-3.75L3 17.25zM20.71 7.04c.39-.39.39-1.02 0-1.41l-2.34-2.34c-.39-.39-1.02-.39-1.41 0l-1.83 1.83 3.75 3.75 1.83-1.83z"/></svg>
<svg style="position:absolute;left:1360.8px;top:641.2px;" width="35.5" height="35.5" viewBox="0 0 24 24"><path fill="#bdbdbd" d="M12 4.5C7 4.5 2.73 7.61 1 12c1.73 4.39 6 7.5 11 7.5s9.27-3.11 11-7.5c-1.73-4.39-6-7.5-11-7.5zM12 17c-2.76 0-5-2.24-5-5s2.24-5 5-5 5 2.24 5 5-2.24 5-5 5zm0-8c-1.66 0-3 1.34-3 3s1.34 3 3 3 3-1.34 3-3-1.34-3-3-3z"/></svg>
<svg style="position:absolute;left:1413.5px;top:641.2px;" width="35.5" height="35.5" viewBox="0 0 24 24"><path fill="#bdbdbd" d="M6 19c0 1.1.9 2 2 2h8c1.1 0 2-.9 2-2V7H6v12zM19 4h-3.5l-1-1h-5l-1 1H5v2h14V4z"/></svg>
<div style="position:absolute;left:240px;top:707px;width:1235px;height:1px;background:#e0e0e0"></div>
<div class="t" style="left:254.0px;top:722.00px;font-size:16px;color:#212121;font-weight:400;">24/02/2026</div>
<div class="t" style="left:-5.8px;width:600px;text-align:center;top:742.00px;font-size:12px;color:#757575;font-weight:400;">15h34</div>
<div class="t" style="left:362.7px;top:731.00px;font-size:15px;color:#212121;font-weight:400;">Flash Info</div>
<div style="position:absolute;left:476px;top:716px;width:44px;height:44px;background:#a7c5ee;border-radius:50%"></div>
<div class="t" style="left:198.5px;width:600px;text-align:center;top:728.00px;font-size:22px;color:#fff;font-weight:400;">R</div>
<svg style="position:absolute;left:503.0px;top:742.7px;" width="17" height="17" viewBox="0 0 17 17"><circle cx="8.5" cy="8.5" r="8" fill="#fff"/><circle cx="8.5" cy="8.5" r="7" fill="#169d55"/><polygon points="6.6,5.2 12,8.5 6.6,11.8" fill="#fff"/></svg>
<div class="t" style="left:546.7px;top:722.00px;font-size:15.4px;color:#212121;font-weight:400;">Rapport annuel 2025</div>
<div style="position:absolute;left:1049.4px;top:710.1px;width:65px;height:72.4px;box-sizing:border-box;border:1px solid #dcdcdc;border-radius:9px;background:#fff"></div>
<div class="t" style="left:781.6px;width:600px;text-align:center;top:716.00px;font-size:12.3px;color:#757575;font-weight:400;">Envoyé à</div>
<div class="t" style="left:781.6px;width:600px;text-align:center;top:736.00px;font-size:20px;color:#111;font-weight:400;">231</div>
<div class="t" style="left:781.4px;width:600px;text-align:center;top:765.00px;font-size:13.5px;color:#757575;font-weight:400;">contacts</div>
<div style="position:absolute;left:1117.3px;top:710.10px;width:151.7px;height:17px;border-radius:9px;background:#dff0df;overflow:hidden"><div style="position:absolute;right:0;top:0;width:36px;height:17px;border-radius:9px;background:#d0e4d0"></div></div>
<div class="t" style="left:1121.7px;top:712.00px;font-size:13px;color:#2e7d32;font-weight:400;">délivrés</div>
<div class="t" style="right:257.7px;top:712.00px;font-size:13px;color:#2e7d32;font-weight:400;">231</div>
<div class="t" style="right:221.0px;top:714.00px;font-size:10px;color:#2e7d32;font-weight:400;">100%</div>
<div style="position:absolute;left:1117.3px;top:728.85px;width:151.7px;height:17px;border-radius:9px;background:#d8e7f5;overflow:hidden"><div style="position:absolute;right:0;top:0;width:36px;height:17px;border-radius:9px;background:#c9dbea"></div></div>
<div class="t" style="left:1121.7px;top:730.00px;font-size:13px;color:#1e5ac8;font-weight:400;">ouverts</div>
<div class="t" style="right:257.7px;top:730.00px;font-size:13px;color:#1e5ac8;font-weight:400;">0</div>
<div class="t" style="right:221.0px;top:733.00px;font-size:10px;color:#1e5ac8;font-weight:400;">0%</div>
<div style="position:absolute;left:1117.3px;top:747.60px;width:151.7px;height:17px;border-radius:9px;background:#efe1fb;overflow:hidden"><div style="position:absolute;right:0;top:0;width:36px;height:17px;border-radius:9px;background:#e2d4f0"></div></div>
<div class="t" style="left:1121.7px;top:749.00px;font-size:13px;color:#4527a0;font-weight:400;">cliqués</div>
<div class="t" style="right:257.7px;top:749.00px;font-size:13px;color:#4527a0;font-weight:400;">0</div>
<div class="t" style="right:221.0px;top:752.00px;font-size:10px;color:#4527a0;font-weight:400;">0%</div>
<div style="position:absolute;left:1117.3px;top:766.35px;width:151.7px;height:17px;border-radius:9px;background:#f8cfd1;overflow:hidden"><div style="position:absolute;right:0;top:0;width:36px;height:17px;border-radius:9px;background:#edc3c6"></div></div>
<div class="t" style="left:1121.7px;top:768.00px;font-size:13px;color:#c62828;font-weight:400;">erreurs</div>
<div class="t" style="right:257.7px;top:768.00px;font-size:13px;color:#c62828;font-weight:400;">0</div>
<div class="t" style="right:221.0px;top:771.00px;font-size:10px;color:#c62828;font-weight:400;">0%</div>
<svg style="position:absolute;left:1308.0px;top:720.2px;" width="35.5" height="35.5" viewBox="0 0 24 24"><path fill="#bdbdbd" d="M3 17.25V21h3.75L17.81 9.94l-3.75-3.75L3 17.25zM20.71 7.04c.39-.39.39-1.02 0-1.41l-2.34-2.34c-.39-.39-1.02-.39-1.41 0l-1.83 1.83 3.75 3.75 1.83-1.83z"/></svg>
<svg style="position:absolute;left:1360.8px;top:720.2px;" width="35.5" height="35.5" viewBox="0 0 24 24"><path fill="#bdbdbd" d="M12 4.5C7 4.5 2.73 7.61 1 12c1.73 4.39 6 7.5 11 7.5s9.27-3.11 11-7.5c-1.73-4.39-6-7.5-11-7.5zM12 17c-2.76 0-5-2.24-5-5s2.24-5 5-5 5 2.24 5 5-2.24 5-5 5zm0-8c-1.66 0-3 1.34-3 3s1.34 3 3 3 3-1.34 3-3-1.34-3-3-3z"/></svg>
<svg style="position:absolute;left:1413.5px;top:720.2px;" width="35.5" height="35.5" viewBox="0 0 24 24"><path fill="#bdbdbd" d="M6 19c0 1.1.9 2 2 2h8c1.1 0 2-.9 2-2V7H6v12zM19 4h-3.5l-1-1h-5l-1 1H5v2h14V4z"/></svg>
<div style="position:absolute;left:240px;top:786px;width:1235px;height:1px;background:#e0e0e0"></div>
<div class="t" style="left:254.0px;top:801.00px;font-size:16px;color:#212121;font-weight:400;">24/02/2026</div>
<div class="t" style="left:-5.8px;width:600px;text-align:center;top:821.00px;font-size:12px;color:#757575;font-weight:400;">14h49</div>
<div class="t" style="left:362.7px;top:810.00px;font-size:15px;color:#212121;font-weight:400;">Flash Info</div>
<div style="position:absolute;left:476px;top:795px;width:44px;height:44px;background:#9bd0d5;border-radius:50%"></div>
<div class="t" style="left:198.5px;width:600px;text-align:center;top:807.00px;font-size:22px;color:#fff;font-weight:400;">R</div>
<svg style="position:absolute;left:503.0px;top:821.7px;" width="17" height="17" viewBox="0 0 17 17"><circle cx="8.5" cy="8.5" r="8" fill="#fff"/><circle cx="8.5" cy="8.5" r="7" fill="#169d55"/><polygon points="6.6,5.2 12,8.5 6.6,11.8" fill="#fff"/></svg>
<div class="t" style="left:546.7px;top:801.00px;font-size:15.4px;color:#212121;font-weight:400;">Flash Info : Nouveautés du printemps</div>
<div style="position:absolute;left:1049.4px;top:789.1px;width:65px;height:72.4px;box-sizing:border-box;border:1px solid #dcdcdc;border-radius:9px;background:#fff"></div>
<div class="t" style="left:781.6px;width:600px;text-align:center;top:795.00px;font-size:12.3px;color:#757575;font-weight:400;">Envoyé à</div>
<div class="t" style="left:781.6px;width:600px;text-align:center;top:815.00px;font-size:20px;color:#111;font-weight:400;">216</div>
<div class="t" style="left:781.4px;width:600px;text-align:center;top:844.00px;font-size:13.5px;color:#757575;font-weight:400;">contacts</div>
<div style="position:absolute;left:1117.3px;top:789.10px;width:151.7px;height:17px;border-radius:9px;background:#dff0df;overflow:hidden"><div style="position:absolute;right:0;top:0;width:36px;height:17px;border-radius:9px;background:#d0e4d0"></div></div>
<div class="t" style="left:1121.7px;top:791.00px;font-size:13px;color:#2e7d32;font-weight:400;">délivrés</div>
<div class="t" style="right:257.7px;top:791.00px;font-size:13px;color:#2e7d32;font-weight:400;">216</div>
<div class="t" style="right:221.0px;top:793.00px;font-size:10px;color:#2e7d32;font-weight:400;">100%</div>
<div style="position:absolute;left:1117.3px;top:807.85px;width:151.7px;height:17px;border-radius:9px;background:#d8e7f5;overflow:hidden"><div style="position:absolute;right:0;top:0;width:36px;height:17px;border-radius:9px;background:#c9dbea"></div></div>
<div class="t" style="left:1121.7px;top:809.00px;font-size:13px;color:#1e5ac8;font-weight:400;">ouverts</div>
<div class="t" style="right:257.7px;top:809.00px;font-size:13px;color:#1e5ac8;font-weight:400;">0</div>
<div class="t" style="right:221.0px;top:812.00px;font-size:10px;color:#1e5ac8;font-weight:400;">0%</div>
<div style="position:absolute;left:1117.3px;top:826.60px;width:151.7px;height:17px;border-radius:9px;background:#efe1fb;overflow:hidden"><div style="position:absolute;right:0;top:0;width:36px;height:17px;border-radius:9px;background:#e2d4f0"></div></div>
<div class="t" style="left:1121.7px;top:828.00px;font-size:13px;color:#4527a0;font-weight:400;">cliqués</div>
<div class="t" style="right:257.7px;top:828.00px;font-size:13px;color:#4527a0;font-weight:400;">0</div>
<div class="t" style="right:221.0px;top:831.00px;font-size:10px;color:#4527a0;font-weight:400;">0%</div>
<div style="position:absolute;left:1117.3px;top:845.35px;width:151.7px;height:17px;border-radius:9px;background:#f8cfd1;overflow:hidden"><div style="position:absolute;right:0;top:0;width:36px;height:17px;border-radius:9px;background:#edc3c6"></div></div>
<div class="t" style="left:1121.7px;top:847.00px;font-size:13px;color:#c62828;font-weight:400;">erreurs</div>
<div class="t" style="right:257.7px;top:847.00px;font-size:13px;color:#c62828;font-weight:400;">0</div>
<div class="t" style="right:221.0px;top:850.00px;font-size:10px;color:#c62828;font-weight:400;">0%</div>
<svg style="position:absolute;left:1308.0px;top:799.2px;" width="35.5" height="35.5" viewBox="0 0 24 24"><path fill="#bdbdbd" d="M3 17.25V21h3.75L17.81 9.94l-3.75-3.75L3 17.25zM20.71 7.04c.39-.39.39-1.02 0-1.41l-2.34-2.34c-.39-.39-1.02-.39-1.41 0l-1.83 1.83 3.75 3.75 1.83-1.83z"/></svg>
<svg style="position:absolute;left:1360.8px;top:799.2px;" width="35.5" height="35.5" viewBox="0 0 24 24"><path fill="#bdbdbd" d="M12 4.5C7 4.5 2.73 7.61 1 12c1.73 4.39 6 7.5 11 7.5s9.27-3.11 11-7.5c-1.73-4.39-6-7.5-11-7.5zM12 17c-2.76 0-5-2.24-5-5s2.24-5 5-5 5 2.24 5 5-2.24 5-5 5zm0-8c-1.66 0-3 1.34-3 3s1.34 3 3 3 3-1.34 3-3-1.34-3-3-3z"/></svg>
<svg style="position:absolute;left:1413.5px;top:799.2px;" width="35.5" height="35.5" viewBox="0 0 24 24"><path fill="#bdbdbd" d="M6 19c0 1.1.9 2 2 2h8c1.1 0 2-.9 2-2V7H6v12zM19 4h-3.5l-1-1h-5l-1 1H5v2h14V4z"/></svg>
<div style="position:absolute;left:240px;top:865px;width:1235px;height:1px;background:#e0e0e0"></div>
<div class="t" style="left:254.0px;top:880.00px;font-size:16px;color:#212121;font-weight:400;">23/02/2026</div>
<div class="t" style="left:-5.8px;width:600px;text-align:center;top:900.00px;font-size:12px;color:#757575;font-weight:400;">14h26</div>
<div class="t" style="left:362.7px;top:889.00px;font-size:15px;color:#212121;font-weight:400;">Flash Info</div>
<div style="position:absolute;left:476px;top:874px;width:44px;height:44px;background:#ac9fdb;border-radius:50%"></div>
<div class="t" style="left:198.5px;width:600px;text-align:center;top:886.00px;font-size:22px;color:#fff;font-weight:400;">L</div>
<svg style="position:absolute;left:503.0px;top:900.7px;" width="17" height="17" viewBox="0 0 17 17"><circle cx="8.5" cy="8.5" r="8" fill="#fff"/><circle cx="8.5" cy="8.5" r="7" fill="#169d55"/><polygon points="6.6,5.2 12,8.5 6.6,11.8" fill="#fff"/></svg>
<div class="t" style="left:546.7px;top:880.00px;font-size:15.4px;color:#212121;font-weight:400;">Lettre d'information - Mars 2026</div>
<div style="position:absolute;left:1049.4px;top:868.1px;width:65px;height:72.4px;box-sizing:border-box;border:1px solid #dcdcdc;border-radius:9px;background:#fff"></div>
<div class="t" style="left:781.6px;width:600px;text-align:center;top:874.00px;font-size:12.3px;color:#757575;font-weight:400;">Envoyé à</div>
<div class="t" style="left:781.6px;width:600px;text-align:center;top:894.00px;font-size:20px;color:#111;font-weight:400;">3095</div>
<div class="t" style="left:781.4px;width:600px;text-align:center;top:923.00px;font-size:13.5px;color:#757575;font-weight:400;">contacts</div>
<div style="position:absolute;left:1117.3px;top:868.10px;width:151.7px;height:17px;border-radius:9px;background:#dff0df;overflow:hidden"><div style="position:absolute;right:0;top:0;width:36px;height:17px;border-radius:9px;background:#d0e4d0"></div></div>
<div class="t" style="left:1121.7px;top:870.00px;font-size:13px;color:#2e7d32;font-weight:400;">délivrés</div>
<div class="t" style="right:257.7px;top:870.00px;font-size:13px;color:#2e7d32;font-weight:400;">3095</div>
<div class="t" style="right:221.0px;top:872.00px;font-size:10px;color:#2e7d32;font-weight:400;">100%</div>
<div style="position:absolute;left:1117.3px;top:886.85px;width:151.7px;height:17px;border-radius:9px;background:#d8e7f5;overflow:hidden"><div style="position:absolute;right:0;top:0;width:36px;height:17px;border-radius:9px;background:#c9dbea"></div></div>
<div class="t" style="left:1121.7px;top:888.00px;font-size:13px;color:#1e5ac8;font-weight:400;">ouverts</div>
<div class="t" style="right:257.7px;top:888.00px;font-size:13px;color:#1e5ac8;font-weight:400;">0</div>
<div class="t" style="right:221.0px;top:891.00px;font-size:10px;color:#1e5ac8;font-weight:400;">0%</div>
<div style="position:absolute;left:1117.3px;top:905.60px;width:151.7px;height:17px;border-radius:9px;background:#efe1fb;overflow:hidden"><div style="position:absolute;right:0;top:0;width:36px;height:17px;border-radius:9px;background:#e2d4f0"></div></div>
<div class="t" style="left:1121.7px;top:907.00px;font-size:13px;color:#4527a0;font-weight:400;">cliqués</div>
<div class="t" style="right:257.7px;top:907.00px;font-size:13px;color:#4527a0;font-weight:400;">0</div>
<div class="t" style="right:221.0px;top:910.00px;font-size:10px;color:#4527a0;font-weight:400;">0%</div>
<div style="position:absolute;left:1117.3px;top:924.35px;width:151.7px;height:17px;border-radius:9px;background:#f8cfd1;overflow:hidden"><div style="position:absolute;right:0;top:0;width:36px;height:17px;border-radius:9px;background:#edc3c6"></div></div>
<div class="t" style="left:1121.7px;top:926.00px;font-size:13px;color:#c62828;font-weight:400;">erreurs</div>
<div class="t" style="right:257.7px;top:926.00px;font-size:13px;color:#c62828;font-weight:400;">0</div>
<div class="t" style="right:221.0px;top:929.00px;font-size:10px;color:#c62828;font-weight:400;">0%</div>
<svg style="position:absolute;left:1308.0px;top:878.2px;" width="35.5" height="35.5" viewBox="0 0 24 24"><path fill="#bdbdbd" d="M3 17.25V21h3.75L17.81 9.94l-3.75-3.75L3 17.25zM20.71 7.04c.39-.39.39-1.02 0-1.41l-2.34-2.34c-.39-.39-1.02-.39-1.41 0l-1.83 1.83 3.75 3.75 1.83-1.83z"/></svg>
<svg style="position:absolute;left:1360.8px;top:878.2px;" width="35.5" height="35.5" viewBox="0 0 24 24"><path fill="#bdbdbd" d="M12 4.5C7 4.5 2.73 7.61 1 12c1.73 4.39 6 7.5 11 7.5s9.27-3.11 11-7.5c-1.73-4.39-6-7.5-11-7.5zM12 17c-2.76 0-5-2.24-5-5s2.24-5 5-5 5 2.24 5 5-2.24 5-5 5zm0-8c-1.66 0-3 1.34-3 3s1.34 3 3 3 3-1.34 3-3-1.34-3-3-3z"/></svg>
<svg style="position:absolute;left:1413.5px;top:878.2px;" width="35.5" height="35.5" viewBox="0 0 24 24"><path fill="#bdbdbd" d="M6 19c0 1.1.9 2 2 2h8c1.1 0 2-.9 2-2V7H6v12zM19 4h-3.5l-1-1h-5l-1 1H5v2h14V4z"/></svg>
<div style="position:absolute;left:1194.4px;top:634.4px;width:217px;height:23px;border:1px solid #444;background:#fff;box-sizing:content-box"></div>
<div class="t" style="left:1202.3px;top:642.00px;font-size:11.8px;color:#333;font-weight:400;">Cliquez ici pour télécharger les erreurs</div>
<svg style="position:absolute;left:1176px;top:615px" width="24" height="27" viewBox="1176 615 24 27"><path d="M1183.6,619.6 Q1183.6,617.9 1185.1,617.9 Q1186.6,617.9 1186.6,619.6 V623.6 L1189.6,624 L1192.6,624.9 L1195.4,626.9 V634.6 L1194,639.2 H1184.5 L1179.6,630.3 V627.5 Q1181,626.8 1183.6,628.6 Z" fill="#fff" stroke="#000" stroke-width="1.15" stroke-linejoin="miter"/><path d="M1186.6,623.6 V627.8 M1189.6,624.1 V627.8 M1192.6,625 V628.2" stroke="#000" stroke-width="1"/></svg>
</body></html>
